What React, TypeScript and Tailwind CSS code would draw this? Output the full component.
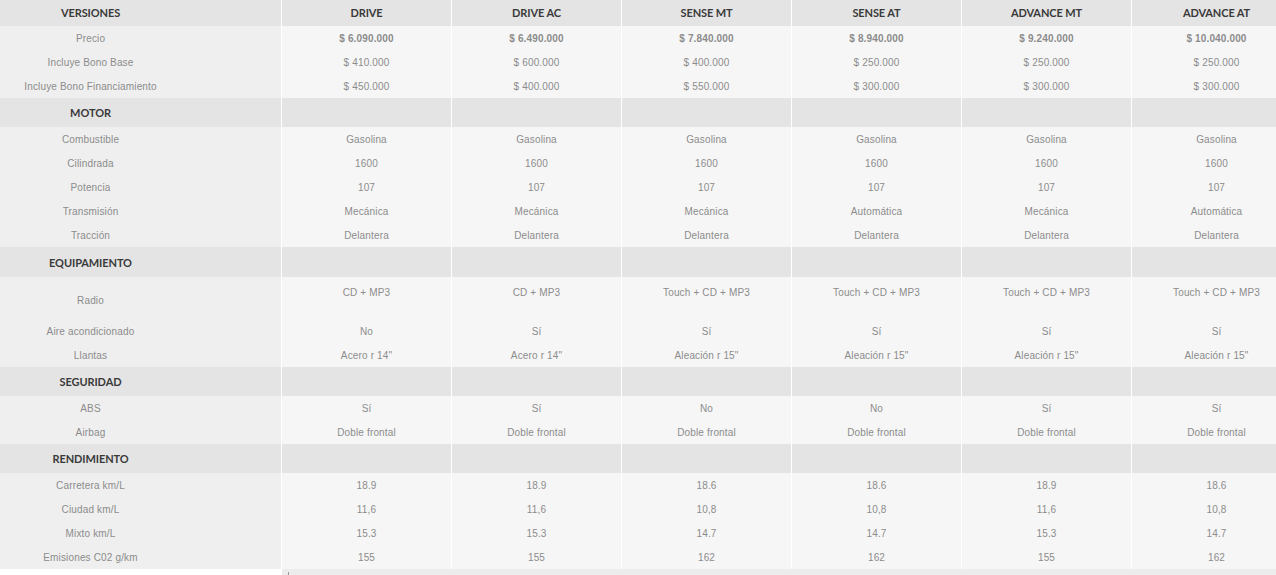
const versions = ["DRIVE", "DRIVE AC", "SENSE MT", "SENSE AT", "ADVANCE MT", "ADVANCE AT"];

type Row = { label: string; values: string[]; bold?: boolean; tall?: boolean };
type Section = { title: string; height: string; rows: Row[] };

const sections: Section[] = [
  {
    title: "",
    height: "",
    rows: [
      {
        label: "Precio",
        bold: true,
        values: ["$ 6.090.000", "$ 6.490.000", "$ 7.840.000", "$ 8.940.000", "$ 9.240.000", "$ 10.040.000"],
      },
      {
        label: "Incluye Bono Base",
        values: ["$ 410.000", "$ 600.000", "$ 400.000", "$ 250.000", "$ 250.000", "$ 250.000"],
      },
      {
        label: "Incluye Bono Financiamiento",
        values: ["$ 450.000", "$ 400.000", "$ 550.000", "$ 300.000", "$ 300.000", "$ 300.000"],
      },
    ],
  },
  {
    title: "MOTOR",
    height: "h-[29px]",
    rows: [
      { label: "Combustible", values: Array(6).fill("Gasolina") },
      { label: "Cilindrada", values: Array(6).fill("1600") },
      { label: "Potencia", values: Array(6).fill("107") },
      {
        label: "Transmisión",
        values: ["Mecánica", "Mecánica", "Mecánica", "Automática", "Mecánica", "Automática"],
      },
      { label: "Tracción", values: Array(6).fill("Delantera") },
    ],
  },
  {
    title: "EQUIPAMIENTO",
    height: "h-[30px]",
    rows: [
      {
        label: "Radio",
        tall: true,
        values: ["CD + MP3", "CD + MP3", "Touch + CD + MP3", "Touch + CD + MP3", "Touch + CD + MP3", "Touch + CD + MP3"],
      },
      { label: "Aire acondicionado", values: ["No", "Sí", "Sí", "Sí", "Sí", "Sí"] },
      {
        label: "Llantas",
        values: ["Acero r 14\"", "Acero r 14\"", "Aleación r 15\"", "Aleación r 15\"", "Aleación r 15\"", "Aleación r 15\""],
      },
    ],
  },
  {
    title: "SEGURIDAD",
    height: "h-[29px]",
    rows: [
      { label: "ABS", values: ["Sí", "Sí", "No", "No", "Sí", "Sí"] },
      { label: "Airbag", values: Array(6).fill("Doble frontal") },
    ],
  },
  {
    title: "RENDIMIENTO",
    height: "h-[29px]",
    rows: [
      { label: "Carretera km/L", values: ["18.9", "18.9", "18.6", "18.6", "18.9", "18.6"] },
      { label: "Ciudad km/L", values: ["11,6", "11,6", "10,8", "10,8", "11,6", "10,8"] },
      { label: "Mixto km/L", values: ["15.3", "15.3", "14.7", "14.7", "15.3", "14.7"] },
      { label: "Emisiones C02 g/km", values: ["155", "155", "162", "162", "155", "162"] },
    ],
  },
];

const head = "font-['Lato','Liberation_Sans',sans-serif] text-[11px] font-bold text-[#3a3a3a] tracking-[-0.1px]";
const body = "font-['Liberation_Sans',Arial,sans-serif] text-[10px] text-[#8c8c8c] tracking-[0.15px]";

function HeaderRow({ title, height, cols }: { title: string; height: string; cols?: string[] }) {
  const shift = cols ? "" : "pt-[2px]";
  return (
    <div className={`flex ${height}`}>
      <div className={`w-[281px] shrink-0 bg-[#e4e4e4] flex items-center ${shift}`}>
        <div className={`w-[181px] text-center ${head}`}>{title}</div>
      </div>
      {Array.from({ length: 6 }).map((_, i) => (
        <div key={i} className={`w-[169px] shrink-0 ml-px bg-[#e4e4e4] flex items-center justify-center ${head}`}>
          {cols ? cols[i] : ""}
        </div>
      ))}
    </div>
  );
}

function DataRow({ row }: { row: Row }) {
  return (
    <div className={`flex ${row.tall ? "h-[42px]" : "h-[24px]"}`}>
      <div className={`w-[281px] shrink-0 bg-[#efefef] flex items-center ${row.tall ? "pt-[4px]" : ""}`}>
        <div className={`w-[181px] text-center ${body}`}>{row.label}</div>
      </div>
      {row.values.map((v, i) => (
        <div
          key={i}
          className={`w-[169px] shrink-0 ml-px bg-[#f6f6f6] flex justify-center ${
            row.tall ? "items-start pt-[8px] leading-[15px]" : "items-center"
          } ${body} ${row.bold ? "font-bold text-[#7a7a7a]" : ""}`}
        >
          {v}
        </div>
      ))}
    </div>
  );
}

export default function App() {
  return (
    <div className="w-[1276px] h-[575px] overflow-hidden bg-white">
      <div className="w-[1301px]">
        <HeaderRow title="VERSIONES" height="h-[26px]" cols={versions} />
        {sections.map((s, si) => (
          <div key={si}>
            {s.title && <HeaderRow title={s.title} height={s.height} />}
            {s.rows.map((r) => (
              <DataRow key={r.label} row={r} />
            ))}
          </div>
        ))}
        <div className="flex h-[7px]">
          <div className="w-[282px] shrink-0 bg-white" />
          <div className="flex-1 bg-[#ececec] relative">
            <div className="absolute left-[6px] top-[3px] w-px h-[3px] bg-[#9a9a9a]" />
          </div>
        </div>
      </div>
    </div>
  );
}
